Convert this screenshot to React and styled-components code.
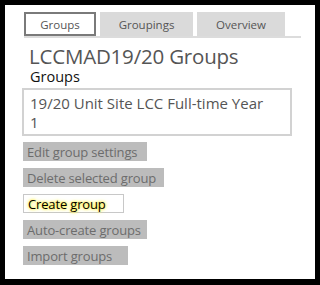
import React from "react";
import styled, { createGlobalStyle } from "styled-components";

const Global = createGlobalStyle`
  html, body { margin: 0; padding: 0; background: #000; }
  body { font-family: "Open Sans", "Noto Sans", sans-serif; }
`;

const Frame = styled.div`
  width: 310px;
  height: 274px;
  margin: 5px 5px 6px 5px;
  background: #fff;
  box-sizing: border-box;
  padding: 7px 14px 0 17px;
`;

const TabBar = styled.div`
  display: flex;
  gap: 4px;
  width: 277px;
  margin-left: 2px;
  border-bottom: 2px solid #dcdcdc;
`;

const Tab = styled.div`
  box-sizing: border-box;
  width: ${(p) => p.$w}px;
  height: 24px;
  display: flex;
  align-items: center;
  justify-content: center;
  font-size: 11.5px;
  color: #555;
  background: ${(p) => (p.$active ? "#fff" : "#dadada")};
  border: ${(p) => (p.$active ? "2px solid #7a7a7a" : "none")};
`;

const Title = styled.h1`
  margin: 6px 0 0 7px;
  font-weight: 400;
  font-size: 20.5px;
  line-height: 24px;
  color: #555;
  letter-spacing: -0.2px;
`;

const Sub = styled.h2`
  margin: 0 0 0 8px;
  font-weight: 400;
  font-size: 14.5px;
  line-height: 17px;
  color: #111;
`;

const ListBox = styled.div`
  box-sizing: border-box;
  width: 270px;
  height: 48px;
  margin: 3px 0 0 0;
  border: 2px solid #d2d2d2;
  padding: 4px 24px 0 6px;
  font-size: 15px;
  line-height: 19px;
  color: #555;
`;

const Buttons = styled.div`
  display: flex;
  flex-direction: column;
  align-items: flex-start;
  gap: 7px;
  margin: 6px 0 0 1px;
`;

const Btn = styled.div`
  box-sizing: border-box;
  height: 19px;
  padding: 0 3px 0 4px;
  display: flex;
  align-items: center;
  font-size: 13px;
  letter-spacing: -0.15px;
  color: ${(p) => (p.$hi ? "#000" : "#6c6c6c")};
  background: ${(p) => (p.$hi ? "#fff" : "#bcbcbc")};
  border: ${(p) => (p.$hi ? "1px solid #c8c8c8" : "none")};
  width: ${(p) => p.$w}px;
  white-space: nowrap;
  text-shadow: ${(p) =>
    p.$hi ? "0 0 4px #fff04a, 0 0 3px #fff04a, 0 0 2px #fff25a" : "none"};
`;

export default function App() {
  return (
    <>
      <Global />
      <Frame>
        <TabBar>
          <Tab $active $w={72}>Groups</Tab>
          <Tab $w={93}>Groupings</Tab>
          <Tab $w={88}>Overview</Tab>
        </TabBar>
        <Title>LCCMAD19/20 Groups</Title>
        <Sub>Groups</Sub>
        <ListBox>19/20 Unit Site LCC Full-time Year 1</ListBox>
        <Buttons>
          <Btn $w={124}>Edit group settings</Btn>
          <Btn $w={141}>Delete selected group</Btn>
          <Btn $hi $w={101}>Create group</Btn>
          <Btn $w={124}>Auto-create groups</Btn>
          <Btn $w={105}>Import groups</Btn>
        </Buttons>
      </Frame>
    </>
  );
}
